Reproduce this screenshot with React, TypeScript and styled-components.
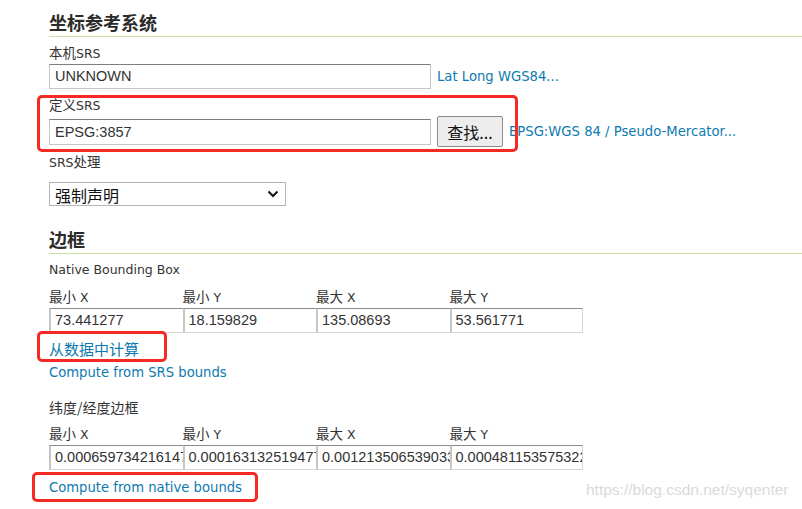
import React from "react";
import styled, { createGlobalStyle } from "styled-components";

const Global = createGlobalStyle`
  html, body { margin: 0; padding: 0; background: #fff; }
  body { font-family: "DejaVu Sans", "Noto Sans CJK SC", sans-serif; color: #333; overflow: hidden; }
`;

const UI = `"DejaVu Sans", "Noto Sans CJK SC", sans-serif`;

const Page = styled.div`
  position: relative;
  width: 802px;
  height: 509px;
  padding: 10px 0 0 49px;
  box-sizing: border-box;
  display: flex;
  flex-direction: column;
  align-items: stretch;
`;

const Heading = styled.h2<{ $top?: number }>`
  margin: ${(p) => p.$top ?? 0}px 0 0 0;
  padding-top: 2px;
  font-family: "Liberation Sans", "Noto Sans CJK SC", sans-serif;
  font-size: 18px;
  font-weight: bold;
  line-height: 24px;
  height: 24px;
  color: #2b2b2b;
  border-bottom: 1px solid #c8e0a4;
  flex: none;
`;

const Han = styled.span<{ $size?: number }>`
  font-family: "Noto Sans CJK SC", sans-serif;
  font-size: ${(p) => p.$size ?? 13.5}px;
  line-height: 18px;
`;

const Label = styled.div<{ $top?: number }>`
  margin-top: ${(p) => p.$top ?? 0}px;
  font-family: ${UI};
  font-size: 12.5px;
  line-height: 18px;
  height: 18px;
  color: #333;
  flex: none;
  white-space: nowrap;
`;

const Row = styled.div<{ $top: number }>`
  display: flex;
  align-items: center;
  margin-top: ${(p) => p.$top}px;
  flex: none;
`;

const TextInput = styled.div<{ $w: number; $h?: number }>`
  width: ${(p) => p.$w}px;
  height: ${(p) => p.$h ?? 25}px;
  box-sizing: border-box;
  border: 1px solid #c6c6c6;
  border-top-color: #7d7d7d;
  padding: 0 5px;
  font-family: "Liberation Sans", Arial, sans-serif;
  font-size: 14.5px;
  line-height: ${(p) => (p.$h ?? 25) - 2}px;
  color: #333;
  white-space: nowrap;
  overflow: hidden;
  background: #fff;
  flex: none;
`;

const Cell = styled(TextInput)`
  border-left: 2px solid #c6c6c6;
  border-right: none;
  border-bottom: 1px solid #d6d6d6;
  border-top: 1px solid #8a8a8a;
  padding: 0 3px 0 4px;
  &:last-child { border-right: 1px solid #d6d6d6; }
`;

const Link = styled.a<{ $ml?: number }>`
  margin-left: ${(p) => p.$ml ?? 0}px;
  font-family: ${UI};
  font-size: 13.2px;
  line-height: 18px;
  color: #0d7ab0;
  text-decoration: none;
  white-space: nowrap;
`;

const LinkLine = styled.div<{ $top: number }>`
  margin-top: ${(p) => p.$top}px;
  line-height: 18px;
  height: 18px;
  position: relative;
  flex: none;
`;

const Button = styled.button`
  margin-left: 6px;
  width: 66px;
  height: 31px;
  box-sizing: border-box;
  border: 1px solid #8a8a8a;
  border-radius: 2px;
  background: #ededed;
  font-family: "Noto Sans CJK SC", sans-serif;
  font-size: 16px;
  color: #111;
  padding: 0;
`;

const Select = styled.div`
  width: 237px;
  height: 24px;
  box-sizing: border-box;
  border: 1px solid #b5b5b5;
  display: flex;
  align-items: flex-end;
  justify-content: space-between;
  padding: 0 6px 0 5px;
  font-family: "Noto Sans CJK SC", sans-serif;
  font-size: 16px;
  line-height: 20px;
  color: #111;
  overflow: hidden;
  svg { align-self: center; }
`;

const Columns = styled.div<{ $top: number }>`
  display: grid;
  grid-template-columns: repeat(4, 133.5px);
  grid-template-rows: 18px;
  margin-top: ${(p) => p.$top}px;
  flex: none;
`;

const ColLabel = styled.div`
  font-family: ${UI};
  font-size: 12.5px;
  line-height: 18px;
  height: 18px;
  color: #333;
  white-space: nowrap;
`;

const Highlight = styled.div<{ $l: number; $t: number; $w: number; $h: number }>`
  position: absolute;
  left: ${(p) => p.$l}px;
  top: ${(p) => p.$t}px;
  width: ${(p) => p.$w}px;
  height: ${(p) => p.$h}px;
  border: 3px solid #f52a22;
  border-radius: 5px;
  box-sizing: border-box;
  pointer-events: none;
`;

const Watermark = styled.div`
  position: absolute;
  left: 586px;
  top: 481px;
  font-family: "Liberation Sans", Arial, sans-serif;
  font-size: 15.5px;
  color: #dadada;
`;

const Block = styled.div<{ $top: number }>`
  position: relative;
  display: flex;
  flex-direction: column;
  margin-top: ${(p) => p.$top}px;
  flex: none;
`;

export default function App() {
  const native = ["73.441277", "18.159829", "135.08693", "53.561771"];
  const latlon = [
    "0.000659734216147",
    "0.000163132519477",
    "0.001213506539033",
    "0.000481153575322",
  ];
  const heads: [string, string][] = [
    ["最小", " X"],
    ["最小", " Y"],
    ["最大", " X"],
    ["最大", " Y"],
  ];
  const headCells = heads.map(([h, a], i) => (
    <ColLabel key={i}>
      <Han>{h}</Han>
      {a}
    </ColLabel>
  ));
  return (
    <>
      <Global />
      <Page>
        <Heading>坐标参考系统</Heading>
        <Label $top={6}>
          <Han>本机</Han>SRS
        </Label>
        <Row $top={3}>
          <TextInput $w={382}>UNKNOWN</TextInput>
          <Link $ml={6}>Lat Long WGS84...</Link>
        </Row>
        <Block $top={6}>
          <Highlight $l={-12} $t={0} $w={481} $h={57} />
          <Label>
            <Han>定义</Han>SRS
          </Label>
          <Row $top={3}>
            <TextInput $w={382} $h={26}>EPSG:3857</TextInput>
            <Button>查找...</Button>
            <Link $ml={6}>EPSG:WGS 84 / Pseudo-Mercator...</Link>
          </Row>
        </Block>
        <Label $top={5}>
          SRS<Han>处理</Han>
        </Label>
        <Row $top={12}>
          <Select>
            <span>强制声明</span>
            <svg width="12" height="8" viewBox="0 0 12 8">
              <path d="M1.5 1.5 L6 6 L10.5 1.5" fill="none" stroke="#111" strokeWidth="2" />
            </svg>
          </Select>
        </Row>
        <Heading $top={21}>边框</Heading>
        <Label $top={7}>Native Bounding Box</Label>
        <Columns $top={8}>{headCells}</Columns>
        <Row $top={3}>
          {native.map((v) => (
            <Cell key={v} $w={133.5} $h={25}>{v}</Cell>
          ))}
        </Row>
        <LinkLine $top={7}>
          <Highlight $l={-12} $t={-9} $w={130} $h={31} />
          <Link>
            <Han $size={15}>从数据中计算</Han>
          </Link>
        </LinkLine>
        <LinkLine $top={5}>
          <Link>Compute from SRS bounds</Link>
        </LinkLine>
        <Label $top={17}>
          <Han $size={14}>纬度/经度边框</Han>
        </Label>
        <Columns $top={8}>{headCells}</Columns>
        <Row $top={3}>
          {latlon.map((v) => (
            <Cell key={v} $w={133.5} $h={25}>{v}</Cell>
          ))}
        </Row>
        <LinkLine $top={8}>
          <Highlight $l={-17} $t={-6} $w={226} $h={30} />
          <Link>Compute from native bounds</Link>
        </LinkLine>
        <Watermark>https://blog.csdn.net/syqenter</Watermark>
      </Page>
    </>
  );
}
